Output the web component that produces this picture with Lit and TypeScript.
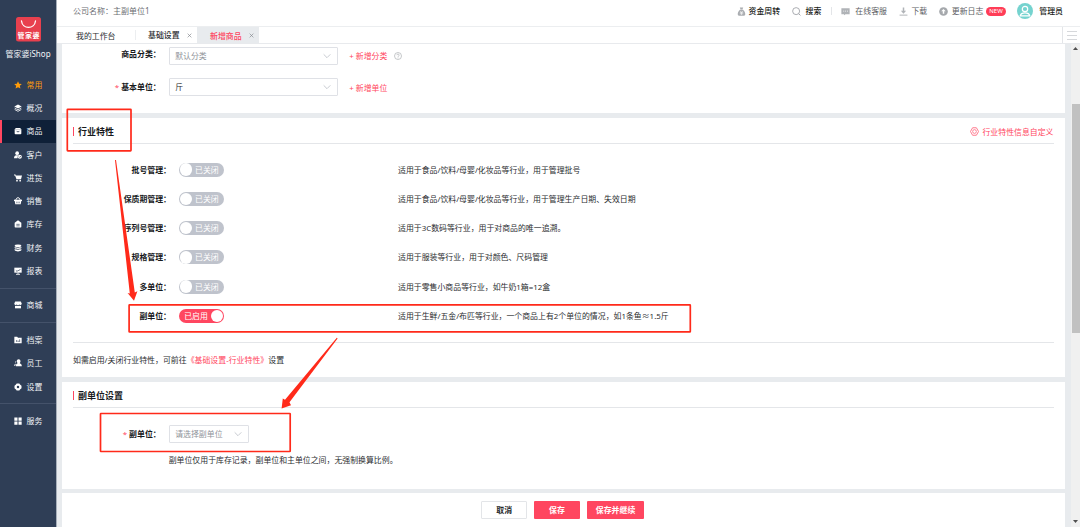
import { LitElement, html, svg, css } from "lit";
import { customElement, property } from "lit/decorators.js";

const W = "#ffffff";
const BG = "#2f3e56";

const icons: Record<string, unknown> = {
  star: svg`<path d="M12 .5l3.500 7.500 8 .9-6 5.500 1.800 8.100L12 18.500l-7.300 4 1.800-8.100L.5 8.900l8-.9z" fill="#ff9c0a"/>`,
  layers: svg`<path d="M12 1.500L23 7.500 12 13.500 1 7.500z" fill=${W}/><path d="M2 12l10 5.500L22 12M2 16.500L12 22l10-5.500" fill="none" stroke=${W} stroke-width="2.400"/>`,
  goods: svg`<path d="M5.500 3h13L23 8.500H1z" fill=${W}/><path d="M2 8h20v11.500a2.500 2.500 0 0 1-2.500 2.500h-15A2.500 2.500 0 0 1 2 19.500z" fill=${W}/><path d="M7 11.500c2 4 8 4 10 0" fill="none" stroke="#0f2038" stroke-width="2"/>`,
  customer: svg`<circle cx="9.500" cy="6.500" r="5.500" fill=${W}/><path d="M0 22c0-6 3-9.500 7-9.500h5L10.500 22z" fill=${W}/><circle cx="17.500" cy="17" r="6" fill=${W}/><path d="M14.500 16.500l2.500 2.700 4-4.200" fill="none" stroke=${BG} stroke-width="2"/>`,
  cart: svg`<path d="M0 1.500h4.500l1 3H24l-3 11H7.500L3.200 4.200H0z" fill=${W}/><circle cx="9" cy="20" r="2.600" fill=${W}/><circle cx="18.500" cy="20" r="2.600" fill=${W}/>`,
  basket: svg`<path d="M5 9l4-6.500h6L19 9" fill="none" stroke=${W} stroke-width="2.600"/><path d="M0 8h24v4H0z" fill=${W}/><path d="M2 12h20l-2 10H4z" fill=${W}/><path d="M8 14v5M12 14v5M16 14v5" stroke=${BG} stroke-width="1.500"/>`,
  store: svg`<path d="M12 1l10 7v12.500a2 2 0 0 1-2 2H4a2 2 0 0 1-2-2V8z" fill=${W}/><path d="M7 13h10M7 17.500h10" stroke=${BG} stroke-width="2"/>`,
  coins: svg`<ellipse cx="12" cy="5" rx="10" ry="3.800" fill=${W}/><path d="M2 8.500c3 3.500 17 3.500 20 0V12c-3 3.500-17 3.500-20 0zM2 14.500c3 3.500 17 3.500 20 0V19c-3 4.500-17 4.500-20 0z" fill=${W}/>`,
  report: svg`<path d="M1 2h22v15H1z" fill=${W}/><path d="M12 16v5M6 22h12" stroke=${W} stroke-width="2.500"/><path d="M5.500 10l4 3.500 3-4 2 2L19 6" fill="none" stroke=${BG} stroke-width="2"/>`,
  shop: svg`<path d="M3.500 1.500h17L23.500 9H.5z" fill=${W}/><path d="M1 9c1 4 6 4 7.300.5C9.500 13 14.500 13 15.700 9.500 17 13 22 13 23 9" fill=${W}/><path d="M3 14.500h18v7.500H3z" fill=${W}/>`,
  folder: svg`<path d="M1 2.500h8.500l2.500 3h11V21.500H1z" fill=${W}/><path d="M8 12v6M12.500 14v4M17 10v8" stroke=${BG} stroke-width="2"/>`,
  staff: svg`<path d="M14 1c3.500 0 5.500 2.500 5.500 6 0 2.500-1 4.500-2.300 5.700 3.800 1.300 6.300 3.800 6.300 9.300H5.500c0-5.500 1.700-8 5.300-9.300C9.500 11.500 8.500 9.500 8.500 7c0-3.500 2-6 5.500-6z" fill=${W}/><path d="M7 5C4.500 5.500 4 8 4.500 10.500c.3 1.500 1 2.300 1.500 3C2 15 .3 17 .3 20H4" fill=${W}/>`,
  gear: svg`<path d="M8 1.500h8l2 3 4.500 3.500v8L18 19.500l-2 3H8l-2-3L1.500 16V8L6 4.500z" fill=${W}/><circle cx="12" cy="12" r="3.800" fill=${BG}/>`,
  grid: svg`<path d="M1 1.500h9.500V11H1zM13.500 1.500H23V11h-9.500zM1 13.500h9.500V23H1zM13.500 13.500H23V23h-9.500z" fill=${W}/>`,
  money: svg`<path d="M7.500 1h9l-2 5.500h-5z" fill="#a9acb0"/><path d="M8 7.500h8c4 3.500 6.500 8 6 12.500-.2 2-1.300 3-3 3H5c-1.700 0-2.800-1-3-3-.5-4.500 2-9 6-12.500z" fill="#a9acb0"/><path d="M8.500 10.500l3.500 4 3.500-4M7.500 15h9M7.500 18h9M12 14.500V21" fill="none" stroke="#fff" stroke-width="1.500"/>`,
  search: svg`<circle cx="11" cy="11" r="9.300" fill="none" stroke="#a0a3a8" stroke-width="2.400"/><path d="M17.500 17.500L22.500 22.500" stroke="#a0a3a8" stroke-width="2.600"/>`,
  chat: svg`<path d="M1 3h22v16h-11l-4 3v-3H1z" fill="#b0b3b7"/><path d="M6 11h2.500M11 11h2.500M16 11h2.500" stroke="#fff" stroke-width="2.200"/>`,
  download: svg`<path d="M10 1h4v9h5l-7 8-7-8h5z" fill="#b0b3b7"/><path d="M1.500 21.700h21" stroke="#b0b3b7" stroke-width="2.600"/>`,
  update: svg`<circle cx="12" cy="12" r="11.500" fill="#a5a8ac"/><path d="M12 5l6 6.500h-4V18h-4v-6.500H6z" fill="#fff"/>`,
  hex: svg`<path d="M7 2h10l5.800 10L17 22H7L1.200 12z" fill="none" stroke="#ff6078" stroke-width="2.200" stroke-linejoin="round"/><circle cx="12" cy="12" r="5" fill="none" stroke="#ff6078" stroke-width="2"/>`,
  help: svg`<circle cx="12" cy="12" r="10.500" fill="none" stroke="#a9acb0" stroke-width="2"/><path d="M8.500 9.500c0-4.500 7-4.500 7 0 0 2.500-3.500 2.500-3.500 5.200M12 16.500v2.300" fill="none" stroke="#a9acb0" stroke-width="2"/>`,
  chevron: svg`<path d="M2 7l10 10L22 7" fill="none" stroke="#b4b8c0" stroke-width="2.200"/>`,
  close: svg`<path d="M3 3l18 18M21 3L3 21" fill="none" stroke="#7d8187" stroke-width="3"/>`,
};

@customElement("ui-icon")
class UiIcon extends LitElement {
  @property() name = "";
  static styles = css`
    :host { display: block; flex: none; width: 8px; height: 8px; }
    svg { display: block; width: 100%; height: 100%; }
  `;
  render() {
    return html`<svg viewBox="0 0 24 24">${icons[this.name]}</svg>`;
  }
}

@customElement("ui-switch")
class UiSwitch extends LitElement {
  @property({ type: Boolean, reflect: true }) on = false;
  static styles = css`
    :host { display: flex; align-items: center; box-sizing: border-box; width: 45px; height: 14px;
      border-radius: 7px; background: #bfc3cc; padding: 0 0.7px; color: #fff; line-height: 14px; }
    :host([on]) { background: #ff4660; flex-direction: row-reverse; }
    .knob { width: 12.6px; height: 12.6px; border-radius: 50%; background: #fff; }
    .text { flex: 1; padding-left: 2.8px; white-space: nowrap; }
    :host([on]) .text { padding-left: 4.5px; }
  `;
  render() {
    return html`<span class="knob"></span><span class="text">${this.on ? "已启用" : "已关闭"}</span>`;
  }
}

const menu: string[][][] = [
  [["star", "常用"], ["layers", "概况"], ["goods", "商品"], ["customer", "客户"], ["cart", "进货"],
   ["basket", "销售"], ["store", "库存"], ["coins", "财务"], ["report", "报表"]],
  [["shop", "商城"]],
  [["folder", "档案"], ["staff", "员工"], ["gear", "设置"]],
  [["grid", "服务"]],
];

const features: [string, string, boolean][] = [
  ["批号管理：", "适用于食品/饮料/母婴/化妆品等行业，用于管理批号", false],
  ["保质期管理：", "适用于食品/饮料/母婴/化妆品等行业，用于管理生产日期、失效日期", false],
  ["序列号管理：", "适用于3C数码等行业，用于对商品的唯一追溯。", false],
  ["规格管理：", "适用于服装等行业，用于对颜色、尺码管理", false],
  ["多单位：", "适用于零售小商品等行业，如牛奶1箱=12盒", false],
  ["副单位：", "适用于生鲜/五金/布匹等行业，一个商品上有2个单位的情况，如1条鱼≈1.5斤", true],
];

@customElement("app-root")
class AppRoot extends LitElement {
  static styles = css`
    :host { display: flex; position: relative; width: 1080px; height: 527px; overflow: hidden;
      font: 7.9px/12px "Noto Sans", "Noto Sans CJK SC", sans-serif; color: #2b2d30; white-space: nowrap;
      background: #e8ebee; }
    * { box-sizing: border-box; }
    .side { width: 57px; flex: none; background: #2f3e56; border-right: 1px solid #a7afba; color: #f1f3f6; }
    .brand { height: 73.2px; padding-top: 17px; display: flex; flex-direction: column; align-items: center; }
    .logo { width: 25px; height: 24.5px; display: block; }
    .brand-name { margin-top: 6px; font-size: 8px; }
    .logo text { font: bold 7px "Noto Sans CJK SC", sans-serif; fill: #fff; }
    .item { height: 23.25px; display: flex; align-items: center; padding-left: 14px; gap: 4.5px; }
    .item.hot { color: #ff9c0a; }
    .item.active { background: #0f2038; border-left: 2.5px solid #ff4660; padding-left: 12px; }
    .split { height: 11.4px; display: flex; align-items: center; }
    .split::before { content: ""; flex: 1; height: 1px; background: #44526a; }
    .main { flex: 1; min-width: 0; display: flex; flex-direction: column; }
    .top { height: 26px; background: #fff; display: flex; align-items: center; padding: 0 17px 4px 16px; }
    .company { color: #6b6e73; flex: 1; font-size: 8px; }
    .tool { display: flex; align-items: center; gap: 3.5px; margin-left: 12px; }
    .tool ui-icon { width: 9px; height: 9px; }
    .tool.money { gap: 2.5px; }
    .tool.search { gap: 4.5px; }
    .tool.chat { margin-left: 0; gap: 5px; }
    .strong { font-weight: 500; color: #1c1e21; }
    .dim { color: #5d6064; }
    .bar { width: 1px; height: 8px; background: #e3e5e8; margin: 0 9px 0 10px; }
    .new { width: 20.5px; height: 9px; border-radius: 4.5px; background: #ff3d57; color: #fff;
      font: 6px/9px "Noto Sans", sans-serif; text-align: center; margin-left: 2.5px; }
    .avatar { width: 16px; height: 16px; display: block; margin: 0 6px 0 11px; }
    .tabs { height: 17.5px; background: #fff; border-top: 1px solid #eceef0; border-bottom: 1px solid #e8eaed;
      display: flex; align-items: center; }
    .tab { height: 16px; display: flex; align-items: center; padding-top: 2px; }
    .tab.first { width: 78px; padding-left: 19px; }
    .tab.mid { width: 62px; padding-left: 12px; border-left: 1px solid #eceef0; height: 10px; padding-top: 1px; font-weight: 500; }
    .tab.cur { width: 62px; padding-left: 13px; background: #e8ebee; color: #ff4660; font-weight: 500; }
    .x { width: 5px; height: 5px; margin-left: 7px; }
    .burger { margin-left: auto; width: 18px; height: 16px; border-left: 1px solid #e3e5e8;
      display: flex; flex-direction: column; gap: 3px; padding: 4.5px 3.5px; }
    .burger span { height: 1px; background: #d6d8db; flex: none; }
    .body { flex: 1; min-height: 0; display: flex; }
    .cards { width: 1008px; padding-left: 5px; display: flex; flex-direction: column; gap: 5px; }
    .card { background: #fff; flex: none; padding: 0 11.5px 0 11px; }
    .card.base { height: 69.5px; padding-top: 3px; }
    .card.traits { height: 259px; }
    .card.unit { height: 106.5px; }
    .card.foot { height: 35px; margin-top: -0.5px; display: flex; justify-content: center; padding: 8px 12.5px 0 11px; gap: 7.3px; }
    .gutter { flex: 1; }
    .scroll { width: 9px; background: #f0f0f0; display: flex; flex-direction: column; align-items: center;
      justify-content: space-between; padding: 3.5px 0 4px; }
    .arrow { width: 5px; height: 3px; display: block; }
    .thumb { width: 8px; height: 229px; background: #c1c1c1; margin-bottom: 133px; }
    .form { display: flex; height: 31.5px; align-items: flex-start; }
    .form.sub { margin-top: 17px; }
    .label { width: 87.7px; text-align: right; font-weight: 700; color: #17191c; }
    .req { color: #ff4660; font-weight: 400; margin-right: 2px; }
    .select { margin-left: 8px; width: 169px; height: 18px; border: 1px solid #dfe1e6; border-radius: 1px;
      display: flex; align-items: center; justify-content: space-between; padding: 0 6px 0 5.5px; }
    .select.short { width: 80.5px; }
    .ph { color: #8f939a; }
    .pink { color: #ff4660; }
    .add { margin-left: 11.5px; padding-top: 3.5px; }
    .q { margin-left: 7px; margin-top: 5px; }
    .high .label { padding-top: 1px; }
    .down .label { padding-top: 3.3px; }
    .head { display: flex; align-items: center; height: 25.5px; padding-top: 2.5px; border-bottom: 1px solid #e4e6e9; }
    .mark { width: 1.4px; height: 9px; background: #ff4660; margin-right: 3.6px; }
    .title { flex: 1; font-size: 9px; font-weight: 700; color: #17191c; }
    .custom { display: flex; align-items: center; gap: 3px; }
    .custom ui-icon { width: 9px; height: 9px; }
    .list { padding-top: 11.5px; height: 199px; border-bottom: 1px solid #e4e6e9; }
    .row { height: 29.25px; display: flex; align-items: center; }
    .row .label { width: 98px; }
    .row ui-switch { margin-left: 8px; }
    .desc { margin-left: 174px; }
    .note { padding-top: 11.5px; font-size: 7.92px; }
    .hint { margin-left: 95.7px; margin-top: -2px; }
    .btn { height: 18px; line-height: 18px; border-radius: 1px; text-align: center; font-weight: 700;
      width: 45.5px; background: #ff4660; color: #fff; }
    .btn.plain { background: #fff; border: 1px solid #e3e5e8; color: #26282b; line-height: 16px; }
    .btn.wide { width: 57px; }
    .marks { position: absolute; left: 0; top: 0; width: 1080px; height: 527px; pointer-events: none; }
  `;

  render() {
    return html`
      <nav class="side">
        <div class="brand">
          <svg class="logo" viewBox="0 0 25 24.5">
            <rect width="25" height="24.5" rx="2.5" fill="#e8404e"/>
            <path d="M5.500 4c1 8.500 13 8.500 14 0" fill="none" stroke="#fff" stroke-width="1.300" stroke-linecap="round"/>
            <text x="1.500" y="21.300" textLength="22">管家婆</text>
          </svg>
          <div class="brand-name">管家婆iShop</div>
        </div>
        ${menu.map((g, i) => html`
          ${i ? html`<div class="split"></div>` : ""}
          ${g.map(([ic, name]) => html`
            <div class="item ${ic === "star" ? "hot" : ic === "goods" ? "active" : ""}">
              <ui-icon name=${ic}></ui-icon><span>${name}</span>
            </div>`)}
        `)}
      </nav>
      <div class="main">
        <header class="top">
          <span class="company">公司名称：主副单位1</span>
          <div class="tool money strong"><ui-icon name="money"></ui-icon>资金周转</div>
          <div class="tool search strong"><ui-icon name="search"></ui-icon>搜索</div>
          <span class="bar"></span>
          <div class="tool chat dim"><ui-icon name="chat"></ui-icon>在线客服</div>
          <div class="tool dim"><ui-icon name="download"></ui-icon>下载</div>
          <div class="tool dim"><ui-icon name="update"></ui-icon>更新日志</div>
          <span class="new">NEW</span>
          <svg class="avatar" viewBox="0 0 16 16">
            <circle cx="8" cy="8" r="8" fill="#75d3cf"/>
            <circle cx="8" cy="6" r="2.700" fill="none" stroke="#fff" stroke-width="1.200"/>
            <path d="M3.200 12.800c.8-4 8.800-4 9.600 0z" fill="none" stroke="#fff" stroke-width="1.200"/>
          </svg>
          <span class="strong">管理员</span>
        </header>
        <div class="tabs">
          <div class="tab first">我的工作台</div>
          <div class="tab mid">基础设置<ui-icon class="x" name="close"></ui-icon></div>
          <div class="tab cur">新增商品<ui-icon class="x" name="close"></ui-icon></div>
          <div class="burger"><span></span><span></span><span></span></div>
        </div>
        <div class="body">
          <div class="cards">
            <section class="card base">
              <div class="form high">
                <div class="label">商品分类：</div>
                <div class="select"><span class="ph">默认分类</span><ui-icon name="chevron"></ui-icon></div>
                <div class="add pink">+ 新增分类</div><ui-icon class="q" name="help"></ui-icon>
              </div>
              <div class="form down">
                <div class="label"><span class="req">*</span>基本单位：</div>
                <div class="select"><span>斤</span><ui-icon name="chevron"></ui-icon></div>
                <div class="add pink">+ 新增单位</div>
              </div>
            </section>
            <section class="card traits">
              <div class="head"><span class="mark"></span><span class="title">行业特性</span>
                <span class="custom pink"><ui-icon name="hex"></ui-icon>行业特性信息自定义</span></div>
              <div class="list">
                ${features.map(([n, d, on]) => html`
                  <div class="row"><div class="label">${n}</div><ui-switch ?on=${on}></ui-switch><div class="desc">${d}</div></div>`)}
              </div>
              <div class="note">如需启用/关闭行业特性，可前往<span class="pink">《基础设置-行业特性》</span>设置</div>
            </section>
            <section class="card unit">
              <div class="head"><span class="mark"></span><span class="title">副单位设置</span></div>
              <div class="form down sub">
                <div class="label"><span class="req">*</span>副单位：</div>
                <div class="select short"><span class="ph">请选择副单位</span><ui-icon name="chevron"></ui-icon></div>
              </div>
              <div class="hint">副单位仅用于库存记录，副单位和主单位之间，无强制换算比例。</div>
            </section>
            <section class="card foot">
              <div class="btn plain">取消</div><div class="btn">保存</div><div class="btn wide">保存并继续</div>
            </section>
          </div>
          <div class="gutter"></div>
          <div class="scroll">
            <svg class="arrow" viewBox="0 0 5 3"><path d="M0 3L2.500 0 5 3z" fill="#505050"/></svg>
            <div class="thumb"></div>
            <svg class="arrow" viewBox="0 0 5 3"><path d="M0 0L2.500 3 5 0z" fill="#505050"/></svg>
          </div>
        </div>
      </div>
      <svg class="marks" viewBox="0 0 1080 527">
        <g fill="none" stroke="#ff2a1a" stroke-width="1.700" stroke-linejoin="round">
          <rect x="67.300" y="109.300" width="63.700" height="41.500" rx="0.500"/>
          <rect x="129.100" y="304.900" width="561.200" height="27" rx="0.500"/>
          <rect x="100.500" y="413.500" width="189.700" height="38" rx="0.500"/>
        </g>
        <path d="M115 160L116 160 134.800 292.500 137.400 291.200 134 300.800 127.600 293 129.800 293.500z" fill="#ff2a1a"/>
        <path d="M336.800 337.800L337.600 338.500 289.500 402.300 291 405.200 281.600 408.400 282.800 398.500 285 399.800z" fill="#ff2a1a"/>
      </svg>
    `;
  }
}
